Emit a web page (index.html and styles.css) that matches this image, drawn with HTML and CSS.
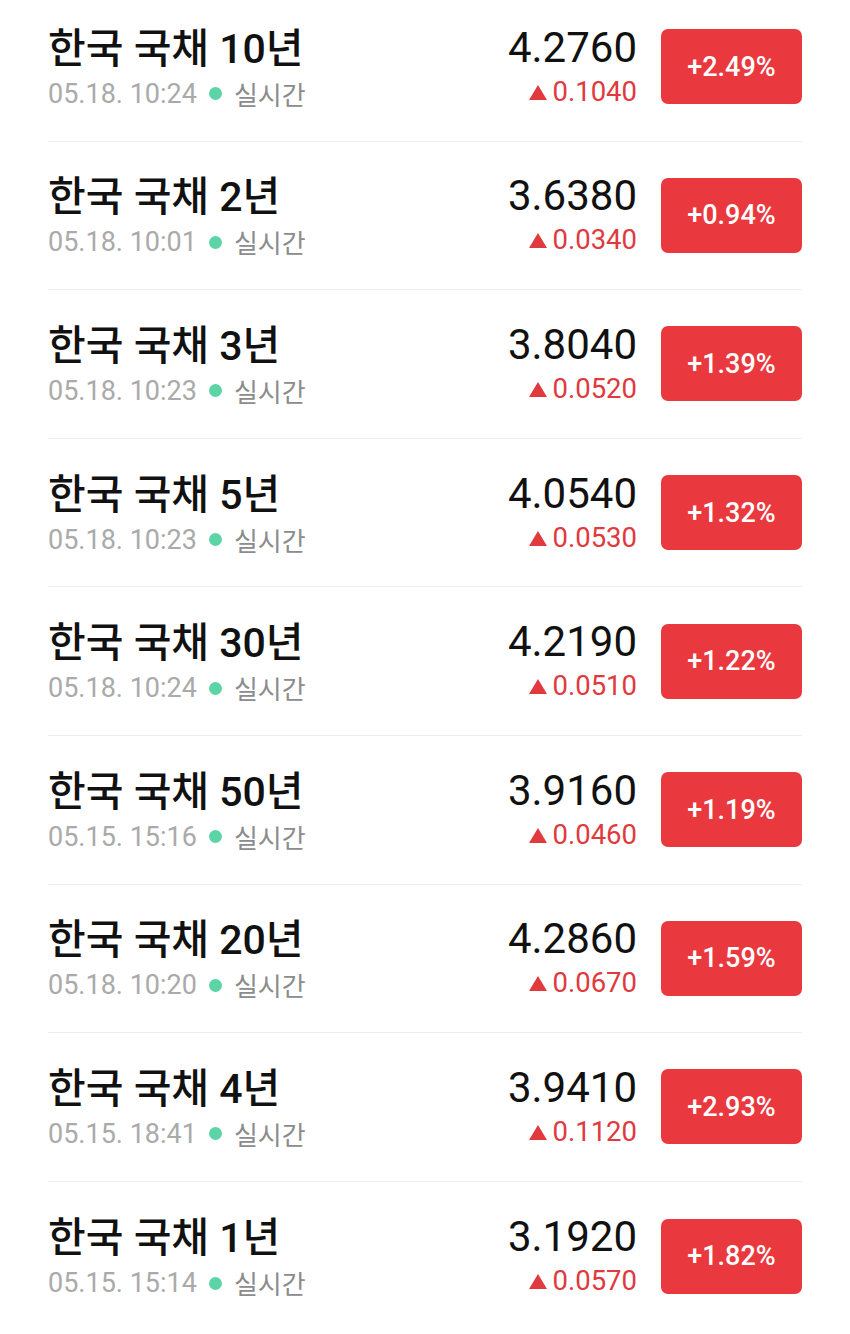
FILE: index.html
```
<!DOCTYPE html>
<html lang="ko">
<head>
  <meta charset="UTF-8">
  <title>국채 금리</title>
  <link rel="stylesheet" href="styles.css">
</head>
<body>

  <ul class="bond-list">
    <li class="bond">
      <div class="info">
        <div class="name">한국 국채 10년</div>
        <div class="meta">05.18. 10:24 <span class="dot"></span> <span class="live">실시간</span></div>
      </div>
      <div class="quote">
        <div class="price">4.2760</div>
        <div class="change"><span class="tri"></span>0.1040</div>
      </div>
      <div class="rate">+2.49%</div>
    </li>
    <li class="bond">
      <div class="info">
        <div class="name">한국 국채 2년</div>
        <div class="meta">05.18. 10:01 <span class="dot"></span> <span class="live">실시간</span></div>
      </div>
      <div class="quote">
        <div class="price">3.6380</div>
        <div class="change"><span class="tri"></span>0.0340</div>
      </div>
      <div class="rate">+0.94%</div>
    </li>
    <li class="bond">
      <div class="info">
        <div class="name">한국 국채 3년</div>
        <div class="meta">05.18. 10:23 <span class="dot"></span> <span class="live">실시간</span></div>
      </div>
      <div class="quote">
        <div class="price">3.8040</div>
        <div class="change"><span class="tri"></span>0.0520</div>
      </div>
      <div class="rate">+1.39%</div>
    </li>
    <li class="bond">
      <div class="info">
        <div class="name">한국 국채 5년</div>
        <div class="meta">05.18. 10:23 <span class="dot"></span> <span class="live">실시간</span></div>
      </div>
      <div class="quote">
        <div class="price">4.0540</div>
        <div class="change"><span class="tri"></span>0.0530</div>
      </div>
      <div class="rate">+1.32%</div>
    </li>
    <li class="bond">
      <div class="info">
        <div class="name">한국 국채 30년</div>
        <div class="meta">05.18. 10:24 <span class="dot"></span> <span class="live">실시간</span></div>
      </div>
      <div class="quote">
        <div class="price">4.2190</div>
        <div class="change"><span class="tri"></span>0.0510</div>
      </div>
      <div class="rate">+1.22%</div>
    </li>
    <li class="bond">
      <div class="info">
        <div class="name">한국 국채 50년</div>
        <div class="meta">05.15. 15:16 <span class="dot"></span> <span class="live">실시간</span></div>
      </div>
      <div class="quote">
        <div class="price">3.9160</div>
        <div class="change"><span class="tri"></span>0.0460</div>
      </div>
      <div class="rate">+1.19%</div>
    </li>
    <li class="bond">
      <div class="info">
        <div class="name">한국 국채 20년</div>
        <div class="meta">05.18. 10:20 <span class="dot"></span> <span class="live">실시간</span></div>
      </div>
      <div class="quote">
        <div class="price">4.2860</div>
        <div class="change"><span class="tri"></span>0.0670</div>
      </div>
      <div class="rate">+1.59%</div>
    </li>
    <li class="bond">
      <div class="info">
        <div class="name">한국 국채 4년</div>
        <div class="meta">05.15. 18:41 <span class="dot"></span> <span class="live">실시간</span></div>
      </div>
      <div class="quote">
        <div class="price">3.9410</div>
        <div class="change"><span class="tri"></span>0.1120</div>
      </div>
      <div class="rate">+2.93%</div>
    </li>
    <li class="bond">
      <div class="info">
        <div class="name">한국 국채 1년</div>
        <div class="meta">05.15. 15:14 <span class="dot"></span> <span class="live">실시간</span></div>
      </div>
      <div class="quote">
        <div class="price">3.1920</div>
        <div class="change"><span class="tri"></span>0.0570</div>
      </div>
      <div class="rate">+1.82%</div>
    </li>
  </ul>

</body>
</html>
```

FILE: styles.css
```
body {
  margin: 0;
  background: #fff;
  font-family: Roboto, "Noto Sans CJK KR", sans-serif;
  color: #111;
}

.bond-list {
  list-style: none;
  margin: -7px 48px 0;
  padding: 0;
}

.bond {
  display: flex;
  align-items: center;
  height: 148.6px;
  box-sizing: border-box;
  border-bottom: 1.5px solid #eeeeee;
}

.bond:last-child {
  border-bottom: none;
}

.info {
  flex: 1;
}

.name {
  font-family: Roboto, "Noto Sans CJK KR", sans-serif;
  font-size: 41px;
  font-weight: 500;
  line-height: 50px;
  color: #111;
}

.meta {
  font-size: 27px;
  line-height: 32px;
  color: #aaaaaa;
  display: flex;
  align-items: center;
  gap: 12px;
  margin-top: 4px;
}

.dot {
  display: inline-block;
  width: 13px;
  height: 13px;
  border-radius: 50%;
  background: #5dd4a6;
}

.live {
  font-family: "Noto Sans CJK KR", sans-serif;
  font-size: 26px;
  color: #8c8c8c;
}

.quote {
  text-align: right;
}

.price {
  font-size: 42px;
  line-height: 46px;
  color: #111;
}

.change {
  font-size: 27.5px;
  line-height: 34px;
  margin-top: 4px;
  color: #e0393e;
}

.tri {
  display: inline-block;
  width: 0;
  height: 0;
  border-left: 9px solid transparent;
  border-right: 9px solid transparent;
  border-bottom: 15px solid #e0393e;
  margin-right: 5px;
  vertical-align: 1px;
}

.rate {
  width: 141px;
  height: 75px;
  margin-left: 24px;
  border-radius: 7px;
  background: #ea393e;
  color: #fff;
  font-size: 27px;
  font-weight: 500;
  display: flex;
  align-items: center;
  justify-content: center;
}
```
